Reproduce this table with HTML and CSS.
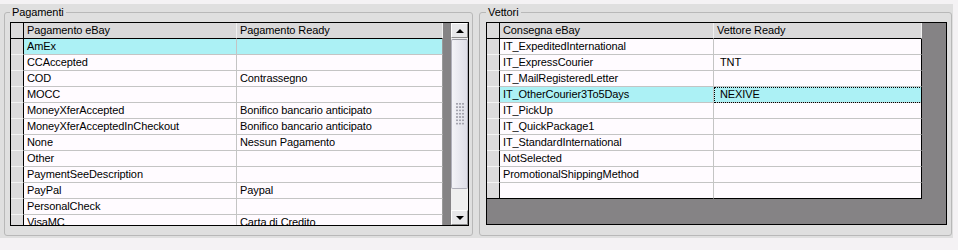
FILE: index.html
```html
<!DOCTYPE html>
<html lang="it">
<head>
<meta charset="utf-8">
<title>Pagamenti e Vettori</title>
<link rel="stylesheet" href="styles.css">
</head>
<body>
<div class="panel">
  <fieldset class="group group-pay">
    <legend>Pagamenti</legend>
    <div class="grid grid-pay">
      <div class="table">
        <div class="row head"><div class="ind"></div><div class="cell c1">Pagamento eBay</div><div class="cell c2">Pagamento Ready</div></div>
        <div class="row sel"><div class="ind"></div><div class="cell c1">AmEx</div><div class="cell c2"></div></div>
        <div class="row"><div class="ind"></div><div class="cell c1">CCAccepted</div><div class="cell c2"></div></div>
        <div class="row"><div class="ind"></div><div class="cell c1">COD</div><div class="cell c2">Contrassegno</div></div>
        <div class="row"><div class="ind"></div><div class="cell c1">MOCC</div><div class="cell c2"></div></div>
        <div class="row"><div class="ind"></div><div class="cell c1">MoneyXferAccepted</div><div class="cell c2">Bonifico bancario anticipato</div></div>
        <div class="row"><div class="ind"></div><div class="cell c1">MoneyXferAcceptedInCheckout</div><div class="cell c2">Bonifico bancario anticipato</div></div>
        <div class="row"><div class="ind"></div><div class="cell c1">None</div><div class="cell c2">Nessun Pagamento</div></div>
        <div class="row"><div class="ind"></div><div class="cell c1">Other</div><div class="cell c2"></div></div>
        <div class="row"><div class="ind"></div><div class="cell c1">PaymentSeeDescription</div><div class="cell c2"></div></div>
        <div class="row"><div class="ind"></div><div class="cell c1">PayPal</div><div class="cell c2">Paypal</div></div>
        <div class="row"><div class="ind"></div><div class="cell c1">PersonalCheck</div><div class="cell c2"></div></div>
        <div class="row"><div class="ind"></div><div class="cell c1">VisaMC</div><div class="cell c2">Carta di Credito</div></div>
      </div>
      <div class="scroll">
        <div class="sb-btn"><span class="arrow-up"></span></div>
        <div class="sb-gap"></div>
        <div class="thumb"><span class="grip"></span></div>
        <div class="track"></div>
        <div class="sb-btn"><span class="arrow-down"></span></div>
      </div>
    </div>
  </fieldset>
  <fieldset class="group group-ship">
    <legend>Vettori</legend>
    <div class="grid grid-ship">
      <div class="table">
        <div class="row head"><div class="ind"></div><div class="cell c1">Consegna eBay</div><div class="cell c2">Vettore Ready</div></div>
        <div class="row"><div class="ind"></div><div class="cell c1">IT_ExpeditedInternational</div><div class="cell c2"></div></div>
        <div class="row"><div class="ind"></div><div class="cell c1">IT_ExpressCourier</div><div class="cell c2 lead">TNT</div></div>
        <div class="row"><div class="ind"></div><div class="cell c1">IT_MailRegisteredLetter</div><div class="cell c2"></div></div>
        <div class="row sel"><div class="ind"></div><div class="cell c1">IT_OtherCourier3To5Days</div><div class="cell c2 lead focus">NEXIVE</div></div>
        <div class="row"><div class="ind"></div><div class="cell c1">IT_PickUp</div><div class="cell c2"></div></div>
        <div class="row"><div class="ind"></div><div class="cell c1">IT_QuickPackage1</div><div class="cell c2"></div></div>
        <div class="row"><div class="ind"></div><div class="cell c1">IT_StandardInternational</div><div class="cell c2"></div></div>
        <div class="row"><div class="ind"></div><div class="cell c1">NotSelected</div><div class="cell c2"></div></div>
        <div class="row"><div class="ind"></div><div class="cell c1">PromotionalShippingMethod</div><div class="cell c2"></div></div>
        <div class="row last"><div class="ind"></div><div class="cell c1"></div><div class="cell c2"></div></div>
      </div>
    </div>
  </fieldset>
</div>
</body>
</html>
```
FILE: styles.css
```css
* { box-sizing: border-box; }

body {
  margin: 0;
  background: #f4f2f4;
  font-family: "Liberation Sans", Arial, sans-serif;
  font-size: 11px;
  color: #000;
}

.panel {
  width: 953px;
  height: 234px;
  margin-top: 4px;
  padding: 2px 0 0 4px;
  background: #dfdfdf;
  display: flex;
  align-items: flex-start;
  gap: 6px;
}

.group {
  margin: 0;
  min-width: 0;
  border: 1px solid #b8b8b8;
  border-radius: 3px;
}

.group legend {
  padding: 0 2px;
  height: 13px;
  line-height: 13px;
  letter-spacing: -0.1px;
}

.group-pay { width: 469px; padding: 3px 3px 9px 5px; }
.group-ship { width: 473px; padding: 3px 4px 10px 6px; }

.grid {
  border: 1px solid #000;
  display: flex;
  overflow: hidden;
}
.grid-pay { width: 459px; height: 204px; }
.grid-ship { width: 461px; height: 203px; }

.table {
  flex: 1;
  min-width: 0;
  background: #858385;
  overflow: hidden;
}

.row {
  display: flex;
  height: 16px;
}

.ind {
  flex: none;
  width: 13px;
  height: 16px;
  background: #dcdbdc;
  border-right: 1px solid #000;
  border-bottom: 1px solid #f3f3f3;
}

.cell {
  flex: none;
  height: 16px;
  line-height: 15px;
  padding-left: 3px;
  white-space: nowrap;
  overflow: hidden;
  letter-spacing: -0.1px;
  background: #fffbff;
  border-right: 1px solid #c4c4c4;
  border-bottom: 1px solid #c4c4c4;
}

.head .cell { background: #dad9da; border-right-color: #f0f0f0; border-bottom-color: #000; }
.head .ind { border-bottom-color: #000; }

.sel .cell { background: #acf1f5; }

.lead { padding-left: 6px; }
.focus { outline: 1px dotted #000; outline-offset: -1px; }

.grid-pay .c1 { width: 213px; }
.grid-pay .c2 { width: 206px; border-right-color: #9a9a9a; }
.grid-pay .head .c2 { border-right-color: #f0f0f0; }

.grid-ship .c1 { width: 214px; }
.grid-ship .c2 { width: 208px; border-right-color: #000; }
.grid-ship .head .c2 { border-right-color: #f0f0f0; }
.grid-ship .last .cell,
.grid-ship .last .ind { border-bottom-color: #000; }

.scroll {
  flex: none;
  width: 17px;
  display: flex;
  flex-direction: column;
  background: #f0f0f0;
}

.sb-btn {
  flex: none;
  height: 15px;
  background: #e8e8ea;
  border: 1px solid;
  border-color: #ffffff #8c8c8c #8c8c8c #ffffff;
  display: flex;
  align-items: center;
  justify-content: center;
}

.arrow-up, .arrow-down {
  width: 0;
  height: 0;
  border-left: 4px solid transparent;
  border-right: 4px solid transparent;
}
.arrow-up { border-bottom: 4px solid #000; }
.arrow-down { border-top: 4px solid #000; }

.sb-gap { flex: none; height: 1px; }

.thumb {
  flex: none;
  height: 150px;
  border: 1px solid #b0b0ba;
  border-top-color: #9a9aa4;
  border-radius: 2px;
  background: linear-gradient(to right, #f3f3f7, #dedee8);
  display: flex;
  align-items: center;
  justify-content: center;
}

.grip {
  width: 8px;
  height: 23px;
  background-image: radial-gradient(circle at 1px 1px, #a4a4ae 0.9px, transparent 1.1px);
  background-size: 3px 3.3px;
}

.track { flex: none; height: 21px; background: #efefef; }
```
